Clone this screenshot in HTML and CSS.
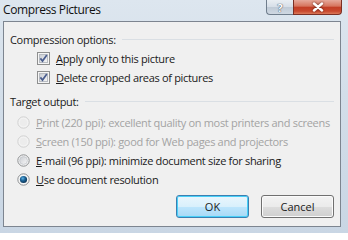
FILE: index.html
```html
<!DOCTYPE html>
<html>
<head>
<meta charset="utf-8">
<link rel="stylesheet" href="styles.css">
</head>
<body>
<div class="window">
  <div class="titlebar">
    <span class="title">Compress Pictures</span>
    <div class="caption-buttons">
      <div class="cap-btn help">?</div>
      <div class="cap-btn close">
        <svg width="12" height="10" viewBox="0 0 12 10"><path d="M2 1.5 L10 8.5 M10 1.5 L2 8.5" stroke="#fff" stroke-width="2.4" stroke-linecap="round"/></svg>
      </div>
    </div>
  </div>
  <div class="client">
    <div class="group-header"><span>Compression options:</span><span class="sep"></span></div>
    <div class="row check-row">
      <svg class="box" width="13" height="13" viewBox="0 0 13 13"><defs><linearGradient id="cg" x1="0" y1="0" x2="1" y2="1"><stop offset="0" stop-color="#c8ccd2"/><stop offset="1" stop-color="#f7f7f7"/></linearGradient></defs><rect x=".5" y=".5" width="12" height="12" fill="#f5f5f5" stroke="#8e8f8f"/><rect x="2.5" y="2.5" width="8" height="8" fill="url(#cg)" stroke="#b8bcc2"/><path d="M3.4 6.4 L5.5 9 L9.8 3" fill="none" stroke="#4a5d8e" stroke-width="1.7"/></svg>
      <span><u>A</u>pply only to this picture</span>
    </div>
    <div class="row check-row">
      <svg class="box" width="13" height="13" viewBox="0 0 13 13"><rect x=".5" y=".5" width="12" height="12" fill="#f5f5f5" stroke="#8e8f8f"/><rect x="2.5" y="2.5" width="8" height="8" fill="url(#cg)" stroke="#b8bcc2"/><path d="M3.4 6.4 L5.5 9 L9.8 3" fill="none" stroke="#4a5d8e" stroke-width="1.7"/></svg>
      <span><u>D</u>elete cropped areas of pictures</span>
    </div>
    <div class="group-header second"><span>Target output:</span><span class="sep"></span></div>
    <div class="row radio-row disabled">
      <svg class="radio" width="13" height="13" viewBox="0 0 13 13"><circle cx="6.5" cy="6.5" r="5.7" fill="#f3f3f3" stroke="#d0d0d0"/><circle cx="6.5" cy="6.5" r="3.8" fill="#ececec"/></svg>
      <span><u>P</u>rint (220 ppi): excellent quality on most printers and screens</span>
    </div>
    <div class="row radio-row disabled">
      <svg class="radio" width="13" height="13" viewBox="0 0 13 13"><circle cx="6.5" cy="6.5" r="5.7" fill="#f3f3f3" stroke="#d0d0d0"/><circle cx="6.5" cy="6.5" r="3.8" fill="#ececec"/></svg>
      <span><u>S</u>creen (150 ppi): good for Web pages and projectors</span>
    </div>
    <div class="row radio-row">
      <svg class="radio" width="13" height="13" viewBox="0 0 13 13"><defs><linearGradient id="rg" x1="0" y1="0" x2="1" y2="1"><stop offset="0" stop-color="#c9ccd1"/><stop offset="1" stop-color="#f8f8f8"/></linearGradient></defs><circle cx="6.5" cy="6.5" r="5.7" fill="#f6f6f6" stroke="#8e9092"/><circle cx="6.5" cy="6.5" r="3.9" fill="url(#rg)" stroke="#c2c5ca" stroke-width=".8"/></svg>
      <span><u>E</u>-mail (96 ppi): minimize document size for sharing</span>
    </div>
    <div class="row radio-row">
      <svg class="radio" width="13" height="13" viewBox="0 0 13 13"><defs><radialGradient id="sg" cx=".4" cy=".35" r=".7"><stop offset="0" stop-color="#5fb3e6"/><stop offset=".45" stop-color="#1d6497"/><stop offset="1" stop-color="#0b2f4e"/></radialGradient></defs><circle cx="6.5" cy="6.5" r="5.7" fill="#f6f6f6" stroke="#8e9092"/><circle cx="6.5" cy="6.5" r="3.6" fill="url(#sg)"/></svg>
      <span><u>U</u>se document resolution</span>
    </div>
    <div class="buttons">
      <button class="btn default">OK</button>
      <button class="btn">Cancel</button>
    </div>
  </div>
</div>
</body>
</html>
```
FILE: styles.css
```css
html, body {
  margin: 0;
  padding: 0;
  background: #ffffff;
}
body {
  font-family: "Open Sans", "Noto Sans", sans-serif;
  font-size: 11px;
  letter-spacing: -0.32px;
  color: #1a1a1a;
  white-space: nowrap;
}
.window {
  width: 348px;
  height: 233px;
  box-sizing: border-box;
  padding: 0 7px 6px 3px;
  background: linear-gradient(to bottom, #dde6ef 0%, #d3dee9 40%, #c9d6e4 100%);
  display: flex;
  flex-direction: column;
}
.titlebar {
  height: 21px;
  display: flex;
  justify-content: space-between;
  align-items: flex-start;
}
.title {
  font-size: 12px;
  line-height: 12px;
  padding-top: 4px;
  letter-spacing: -0.4px;
  color: #101010;
}
.caption-buttons {
  display: flex;
  margin-right: -1px;
}
.cap-btn {
  height: 15px;
  box-sizing: border-box;
  display: flex;
  align-items: center;
  justify-content: center;
  border: 1px solid #6f7d8c;
  border-top: none;
}
.help {
  width: 27px;
  border-radius: 0 0 0 4px;
  background: linear-gradient(to bottom, #e9eef3 0%, #d6dee7 50%, #bfcad6 51%, #cfd8e2 100%);
  color: #ffffff;
  font-weight: bold;
  font-size: 11px;
  line-height: 13px;
  letter-spacing: 0;
  text-shadow: 0 0 1px #3a4a5c, 0 0 1px #3a4a5c;
  border-right: none;
}
.close {
  width: 49px;
  border-color: #7b2f24;
  border-radius: 0 0 4px 0;
  background: linear-gradient(to bottom, #e6a99b 0%, #d6735c 45%, #c23d25 50%, #c9492e 80%, #db7a5a 100%);
}
.close svg {
  filter: drop-shadow(0 0 1px #5a1a10);
}
.client {
  flex: 1;
  border: 1px solid #7d8590;
  background: #f0f0f0;
  padding: 8px 6px 8px 6px;
  display: flex;
  flex-direction: column;
}
.group-header {
  height: 19px;
  display: flex;
  align-items: center;
}
.group-header.second {
  margin-top: 5px;
}
.sep {
  flex: 1;
  margin-left: 6px;
  border-top: 1px solid #dadfe4;
  height: 0;
}
.row {
  height: 19px;
  display: flex;
  align-items: center;
}
.check-row .box {
  margin-left: 27px;
  margin-right: 6px;
  flex: none;
}
.radio-row .radio {
  margin-left: 7px;
  margin-right: 6px;
  flex: none;
}
.second + .radio-row {
  margin-top: 2px;
}
.disabled {
  color: #a3a3a3;
}
.buttons {
  margin-top: 6px;
  display: flex;
  justify-content: flex-end;
  gap: 12px;
}
.btn {
  width: 73px;
  height: 23px;
  font-family: inherit;
  font-size: 11px;
  letter-spacing: 0;
  color: #1a1a1a;
  border: 1px solid #707070;
  border-radius: 3px;
  background: linear-gradient(to bottom, #f3f3f3 0%, #ebebeb 50%, #dddddd 51%, #cfcfcf 100%);
  box-shadow: inset 0 0 0 1px #fbfbfb;
  padding: 0;
}
.default {
  border-color: #3c7fb1;
  background: linear-gradient(to bottom, #eaf6fd 0%, #d9f0fc 50%, #bee6fd 51%, #a7d9f5 100%);
  box-shadow: inset 0 0 0 1px #48d0f8;
}
```
